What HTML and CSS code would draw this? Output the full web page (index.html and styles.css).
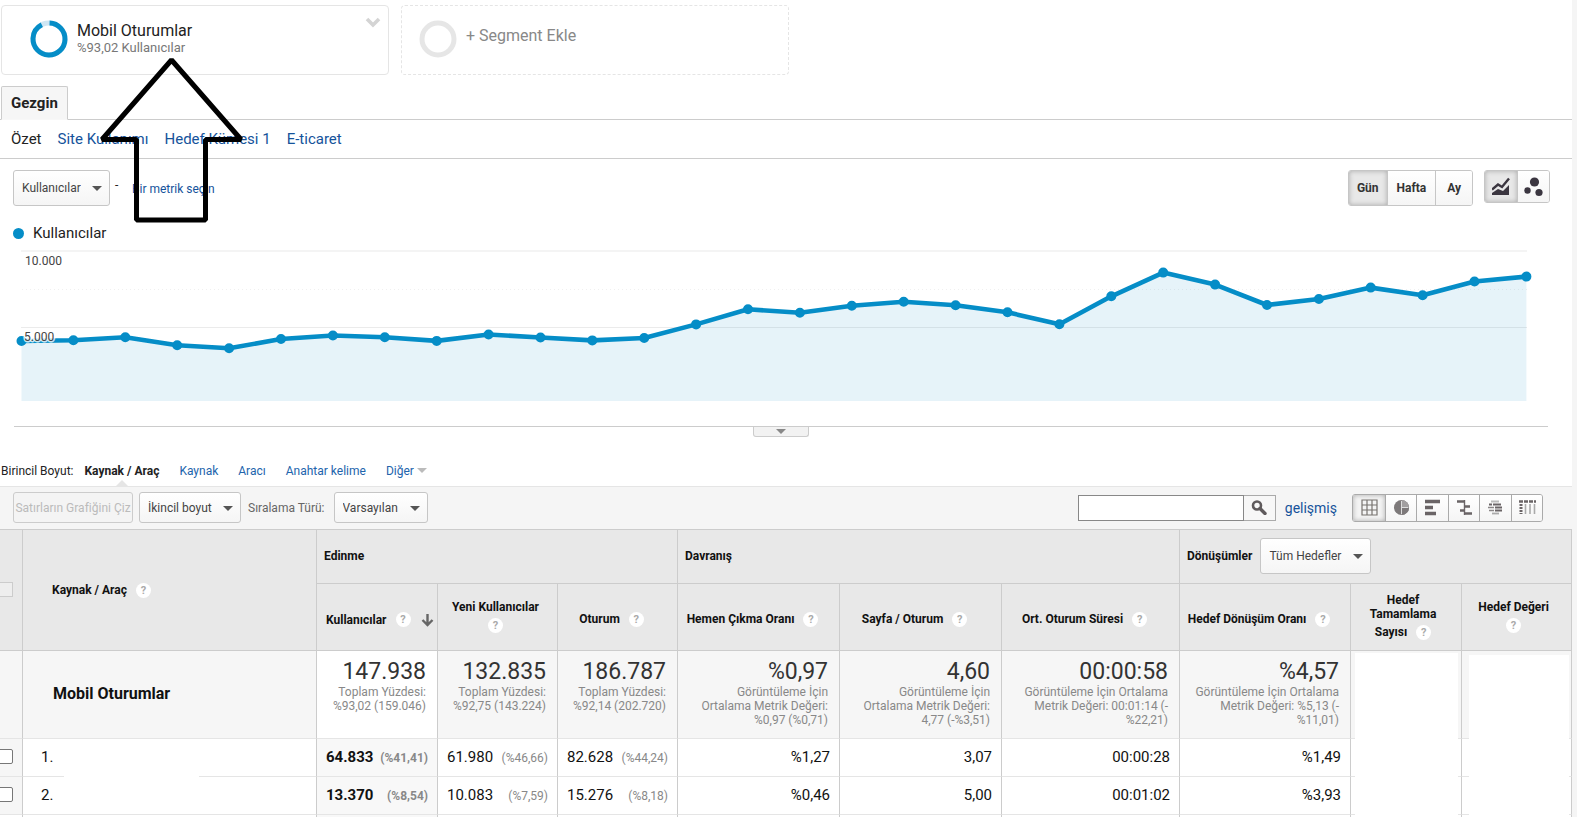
FILE: index.html
```html
<!DOCTYPE html>
<html lang="tr">
<head>
<meta charset="utf-8">
<title>Gezgin - Mobil Oturumlar</title>
<link rel="stylesheet" href="styles.css">
</head>
<body>
<main class="page">
  <section class="segments">
    <div class="segment">
      <svg class="ring" width="38" height="38" viewBox="0 0 38 38" aria-hidden="true"><circle cx="19" cy="19" r="16" fill="none" stroke="#cfe6f3" stroke-width="5"/><circle cx="19" cy="19" r="16" fill="none" stroke="#058dc7" stroke-width="5" pathLength="100" stroke-dasharray="92 8" transform="rotate(-88 19 19)"/></svg>
      <div class="segment-text"><div class="segment-name">Mobil Oturumlar</div><div class="segment-sub">%93,02 Kullanıcılar</div></div>
      <button class="segment-menu" aria-label="Segment menüsü"><svg width="16" height="11" viewBox="0 0 16 11"><path d="M2 2l6 6 6-6" fill="none" stroke="#d4d4d4" stroke-width="3.6"/></svg></button>
    </div>
    <button class="segment segment-add">
      <svg class="ring" width="38" height="38" viewBox="0 0 38 38" aria-hidden="true"><circle cx="19" cy="19" r="16" fill="none" stroke="#e6e6e6" stroke-width="5"/></svg>
      <span class="add-label">+ Segment Ekle</span>
    </button>
  </section>

  <div class="tabs"><button class="tab">Gezgin</button></div>
  <nav class="subnav"><span>Özet</span><a href="#">Site Kullanımı</a><a href="#">Hedef Kümesi 1</a><a href="#">E-ticaret</a></nav>

  <section class="controls">
    <span class="select tall"><select aria-label="Metrik"><option>Kullanıcılar</option></select></span>
    <span class="dash">-</span>
    <a class="metric-link" href="#">Bir metrik seçin</a>
    <div class="group periods"><button class="on">Gün</button><button>Hafta</button><button>Ay</button></div>
    <div class="group charts">
      <button class="on" aria-label="Çizgi grafik"><svg width="18" height="19" viewBox="0 0 18 19"><path d="M0 18v-2l6-4 5 2 6-6v10z" fill="#3b3640"/><path d="M0 12.500l6-5 4 2.500 7-8.500" fill="none" stroke="#3b3640" stroke-width="2.400"/></svg></button>
      <button aria-label="Hareket grafiği"><svg width="19" height="20" viewBox="0 0 19 20"><g fill="#3b3640"><circle cx="10.500" cy="5" r="4.600"/><circle cx="3.500" cy="13.500" r="3.200"/><circle cx="15" cy="15.500" r="3.600"/></g></svg></button>
    </div>
  </section>

  <div class="legend"><i class="dot"></i>Kullanıcılar</div>
  <svg class="chart" viewBox="0 243 1572 169" role="img" aria-label="Günlük kullanıcılar">
    <path d="M21 251H1527" stroke="#f4f4f4" stroke-width="2"/>
    <path d="M22 289.500H1527" stroke="#f0f0f0" stroke-dasharray="1 3"/>
    <path d="M21 327.500H1527" stroke="#ebebeb"/>
    <path d="M21.500 401V341L73.400 340.300L125.300 337.300L177.200 345.300L229.100 348.300L281 339L332.900 335.500L384.800 337.300L436.700 340.900L488.600 334.500L540.500 337.500L592.300 340.400L644.200 338L696.100 324.400L748 309.300L799.900 312.800L851.800 305.800L903.700 301.700L955.600 305.300L1007.500 312.300L1059.400 324.300L1111.300 296.300L1163.200 272.600L1215.100 284.600L1267 305L1318.900 299L1370.700 287.600L1422.600 295.300L1474.500 281.500L1526.400 276.600V401z" fill="#058dc7" fill-opacity=".1"/>
    <polyline points="21.500,341 73.400,340.300 125.300,337.300 177.200,345.300 229.100,348.300 281,339 332.900,335.500 384.800,337.300 436.700,340.900 488.600,334.500 540.500,337.500 592.300,340.400 644.200,338 696.100,324.400 748,309.300 799.900,312.800 851.800,305.800 903.700,301.700 955.600,305.300 1007.500,312.300 1059.400,324.300 1111.300,296.300 1163.200,272.600 1215.100,284.600 1267,305 1318.900,299 1370.700,287.600 1422.600,295.300 1474.500,281.500 1526.400,276.600" fill="none" stroke="#058dc7" stroke-width="4.600" stroke-linejoin="round"/>
    <path d="M21.500 341h0M73.400 340.300h0M125.300 337.300h0M177.200 345.300h0M229.100 348.300h0M281 339h0M332.900 335.500h0M384.800 337.300h0M436.700 340.900h0M488.600 334.500h0M540.500 337.500h0M592.300 340.400h0M644.200 338h0M696.100 324.400h0M748 309.300h0M799.900 312.800h0M851.800 305.800h0M903.700 301.700h0M955.600 305.300h0M1007.500 312.300h0M1059.400 324.300h0M1111.300 296.300h0M1163.200 272.600h0M1215.100 284.600h0M1267 305h0M1318.900 299h0M1370.700 287.600h0M1422.600 295.300h0M1474.500 281.500h0M1526.400 276.600h0" stroke="#058dc7" stroke-width="10" stroke-linecap="round"/>
    <text class="axis" x="25" y="265">10.000</text>
    <text class="axis" x="24" y="341">5.000</text>
  </svg>
  <div class="splitter"><button class="handle" aria-label="Grafiği gizle"></button></div>

  <nav class="dimensions"><span>Birincil Boyut:</span><strong class="current">Kaynak / Araç</strong><a href="#">Kaynak</a><a href="#">Aracı</a><a href="#">Anahtar kelime</a><a class="more" href="#">Diğer</a></nav>

  <section class="toolbar">
    <button class="plot" disabled>Satırların Grafiğini Çiz</button>
    <span class="select"><select aria-label="İkincil boyut"><option>İkincil boyut</option></select></span>
    <label class="sort" for="sort">Sıralama Türü:</label>
    <span class="select"><select id="sort"><option>Varsayılan</option></select></span>
    <div class="search"><input type="text" aria-label="Ara"><button aria-label="Ara"><svg width="16" height="15" viewBox="0 0 16 15"><circle cx="6" cy="5.500" r="4" fill="none" stroke="#5f5a5c" stroke-width="2.600"/><path d="M9 8.500l5 5" stroke="#5f5a5c" stroke-width="3.400" stroke-linecap="round"/></svg></button></div>
    <a class="advanced" href="#">gelişmiş</a>
    <div class="group views">
      <button class="on" aria-label="Tablo"><svg width="17" height="17" viewBox="0 0 17 17"><path d="M1 1h15v15H1zM6 1v15M11 1v15M1 6h15M1 11h15" fill="none" stroke="#77736f" stroke-width="1.200"/></svg></button>
      <button aria-label="Yüzde"><svg width="17" height="17" viewBox="0 0 17 17"><circle cx="8.500" cy="8.500" r="7.500" fill="#7d797a"/><path d="M8.500 1a7.500 7.500 0 0 1 0 15z" fill="#a29fa0"/><path d="M8.500 2v13M8.500 8.500H15" stroke="#ddd"/><path d="M9 9h7a7.500 7.500 0 0 1-7 7z" fill="#7d797a"/></svg></button>
      <button aria-label="Performans"><svg width="17" height="17" viewBox="0 0 17 17"><path d="M1 2.500h15M1 8.500h8M1 14.500h11" stroke="#6a6466" stroke-width="3.400"/></svg></button>
      <button aria-label="Karşılaştırma"><svg width="17" height="17" viewBox="0 0 17 17"><path d="M8.500 1v15" stroke="#6a6466" stroke-width="1.400"/><path d="M1 2.500h7M9 7.500h5M4 11.500h4M9 14.500h7" stroke="#6a6466" stroke-width="2.400"/></svg></button>
      <button aria-label="Terim bulutu"><svg width="17" height="17" viewBox="0 0 17 17"><path d="M4 2.500h8" stroke="#bbb" stroke-width="2"/><path d="M2 5.500h3M6 5.500h8M8 8.500h7M8 11.500h7" stroke="#6a6466" stroke-width="2.200"/><path d="M1 8.500h6M2 11.500h5" stroke="#8a8687" stroke-width="1.600"/><path d="M5 14.500h7" stroke="#aaa" stroke-width="1.800"/></svg></button>
      <button aria-label="Özet tablo"><svg width="17" height="17" viewBox="0 0 17 17"><path d="M0 2.500h17" stroke="#6a6466" stroke-width="2.600" stroke-dasharray="4 1"/><path d="M2 5v10" stroke="#6a6466" stroke-width="3" stroke-dasharray="2 1"/><path d="M6.500 5v10M11 5v10M15.500 5v10" stroke="#aaa" stroke-width="1.600"/></svg></button>
    </div>
  </section>

  <table class="report">
    <colgroup><col class="c-check"><col class="c-source"><col class="c-users"><col class="c-count"><col class="c-count"><col class="c-rate"><col class="c-rate"><col class="c-time"><col class="c-conv"><col class="c-goals"><col class="c-value"></colgroup>
    <thead>
      <tr class="groups"><th rowspan="2" class="check"><input type="checkbox" disabled aria-label="Tümünü seç"></th><th rowspan="2" class="source">Kaynak / Araç<i class="help">?</i></th><th colspan="3">Edinme</th><th colspan="3">Davranış</th><th colspan="3"><div class="goal-head"><label for="goals">Dönüşümler</label><span class="select tall"><select id="goals"><option>Tüm Hedefler</option></select></span></div></th></tr>
      <tr class="metrics"><th class="sorted"><div>Kullanıcılar<i class="help">?</i><svg class="down" width="13" height="14" viewBox="0 0 13 14"><path d="M6.500 1v11M1.500 7l5 5 5-5" fill="none" stroke="#666" stroke-width="2.400"/></svg></div></th><th class="wrap">Yeni Kullanıcılar<br><i class="help alone">?</i></th><th>Oturum<i class="help">?</i></th><th>Hemen Çıkma Oranı<i class="help">?</i></th><th>Sayfa / Oturum<i class="help">?</i></th><th>Ort. Oturum Süresi<i class="help">?</i></th><th>Hedef Dönüşüm Oranı<i class="help">?</i></th><th class="wrap">Hedef<br>Tamamlama<br>Sayısı<i class="help last-line">?</i></th><th class="wrap">Hedef Değeri<br><i class="help alone">?</i></th></tr>
    </thead>
    <tbody>
      <tr class="totals"><td></td><td class="title">Mobil Oturumlar</td>
        <td class="sorted"><b>147.938</b>Toplam Yüzdesi: %93,02 (159.046)</td>
        <td><b>132.835</b>Toplam Yüzdesi: %92,75 (143.224)</td>
        <td><b>186.787</b>Toplam Yüzdesi: %92,14 (202.720)</td>
        <td><b>%0,97</b>Görüntüleme İçin<br>Ortalama Metrik Değeri:<br>%0,97 (%0,71)</td>
        <td><b>4,60</b>Görüntüleme İçin<br>Ortalama Metrik Değeri:<br>4,77 (-%3,51)</td>
        <td><b>00:00:58</b>Görüntüleme İçin Ortalama<br>Metrik Değeri: 00:01:14 (-<br>%22,21)</td>
        <td><b>%4,57</b>Görüntüleme İçin Ortalama<br>Metrik Değeri: %5,13 (-<br>%11,01)</td>
        <td class="hidden"><span class="cover"></span></td><td class="hidden"><span class="cover cover-last"></span></td></tr>
      <tr class="row"><td class="check"><input type="checkbox" aria-label="Satır 1"></td><td class="index">1.<span class="gap"></span></td>
        <td class="sorted"><div class="pair"><span>64.833</span><small>(%41,41)</small></div></td><td><div class="pair"><span>61.980</span><small>(%46,66)</small></div></td><td><div class="pair"><span>82.628</span><small>(%44,24)</small></div></td>
        <td>%1,27</td><td>3,07</td><td>00:00:28</td><td>%1,49</td><td></td><td></td></tr>
      <tr class="row"><td class="check"><input type="checkbox" aria-label="Satır 2"></td><td class="index">2.</td>
        <td class="sorted"><div class="pair"><span>13.370</span><small>(%8,54)</small></div></td><td><div class="pair"><span>10.083</span><small>(%7,59)</small></div></td><td><div class="pair"><span>15.276</span><small>(%8,18)</small></div></td>
        <td>%0,46</td><td>5,00</td><td>00:01:02</td><td>%3,93</td><td></td><td></td></tr>
      <tr class="rest"><td></td><td></td><td class="sorted"></td><td></td><td></td><td></td><td></td><td></td><td></td><td></td><td></td></tr>
    </tbody>
  </table>
</main>
<svg class="arrow" width="146" height="166" viewBox="98 57 146 166" aria-hidden="true"><path d="M171.500 60L241 139.500H205.500V220H136.500V139.500H102z" fill="none" stroke="#000" stroke-width="5" stroke-linejoin="bevel"/></svg>
</body>
</html>
```
FILE: styles.css
```css
* { box-sizing: border-box; }
body { margin: 0; background: #f5f5f5; font-family: Roboto, "Liberation Sans", sans-serif; font-size: 12px; color: #222; }
button, input, select { font: inherit; color: inherit; margin: 0; padding: 0; }
button { cursor: pointer; }
a { color: #15539b; text-decoration: none; }
.page { background: #fff; margin-right: 5px; overflow: hidden; }

.segments { display: flex; gap: 12px; padding: 5px 0 0 1px; }
.segment { position: relative; display: flex; width: 388px; height: 70px; padding: 14px 28px; border: 1px solid #e5e5e5; border-radius: 4px; background: #fff; text-align: left; }
.segment-add { align-items: flex-start; border-style: dashed; padding-left: 17px; }
.segment-text { padding: 1px 0 0 9px; }
.segment-name { font-size: 16px; line-height: 20px; }
.segment-sub { color: #777; font-size: 13px; line-height: 14px; }
.segment-menu { position: absolute; top: 11px; right: 7px; border: 0; background: none; }
.segment-menu svg { display: block; }
.add-label { padding-left: 9px; font-size: 16px; line-height: 32px; color: #888; }

.tabs { display: flex; margin-top: 11px; padding-left: 1px; border-bottom: 1px solid #ccc; }
.tab { height: 34px; margin-bottom: -1px; padding: 0 9px; border: 1px solid #ccc; border-bottom-color: #f8f8f8; border-radius: 2px 2px 0 0; background: #f6f6f6; font-size: 15px; font-weight: bold; }
.subnav { display: flex; align-items: center; gap: 16px; height: 39px; padding-left: 11px; border-bottom: 1px solid #ccc; font-size: 15px; }

.controls { display: flex; align-items: flex-start; padding: 11px 22px 0 13px; }
.select { position: relative; display: inline-flex; height: 31px; }
.select.tall { height: 36px; }
.select select { appearance: none; padding: 0 28px 0 8px; border: 1px solid #c6c6c6; border-radius: 3px; background: linear-gradient(#fff, #f5f5f5); color: #444; font-size: 12px; }
.select::after { content: ""; position: absolute; right: 8px; top: 50%; margin-top: -2px; border: 5px solid transparent; border-top-color: #555; border-bottom: 0; pointer-events: none; }
.dash { width: 22px; padding-left: 5px; line-height: 30px; }
.metric-link { padding-top: 2px; line-height: 34px; }
.group { display: flex; border: 1px solid #c6c6c6; border-radius: 3px; overflow: hidden; }
.group button { display: flex; align-items: center; justify-content: center; border: 0; border-left: 1px solid #c6c6c6; background: linear-gradient(#fff, #f5f5f5); }
.group button:first-child { border-left: 0; }
.group .on { background: #e8e8e8; box-shadow: inset 0 0 5px #aaa; }
.periods { margin-left: auto; height: 36px; font-weight: bold; color: #333; }
.periods button { padding: 0 9px; }
.periods button:first-child { padding: 0 8px; }
.periods button:last-child { padding: 0 11px; }
.charts { margin-left: 11px; height: 33px; }
.charts button { width: 32px; }

.legend { display: flex; align-items: center; gap: 9px; padding: 17px 0 0 13px; font-size: 15px; line-height: 20px; }
.dot { width: 11px; height: 11px; border-radius: 50%; background: #058dc7; }
.chart { display: block; width: 100%; }
.axis { font-size: 12px; fill: #444; stroke: #fff; stroke-width: 3px; paint-order: stroke; stroke-opacity: .8; }
.splitter { display: flex; justify-content: center; margin: 14px 24px 0 14px; border-top: 1px solid #ccc; }
.handle { display: flex; align-items: center; justify-content: center; width: 56px; height: 10px; border: 1px solid #ccc; border-top: 0; border-radius: 0 0 3px 3px; background: #f2f2f2; }
.handle::after { content: ""; border: 5px solid transparent; border-top-color: #888; border-bottom: 0; }

.dimensions { display: flex; height: 49px; padding: 19px 0 0 1px; line-height: 30px; }
.dimensions a { margin-left: 20px; color: #2264ac; }
.dimensions .current { position: relative; margin-left: 11px; }
.current::after { content: ""; position: absolute; bottom: 0; left: 50%; margin-left: -6px; border: 6px solid transparent; border-bottom-color: #e5e5e5; border-top: 0; }
.more::after { content: ""; display: inline-block; margin: 0 0 2px 3px; border: 5px solid transparent; border-top-color: #bbb; border-bottom: 0; }

.toolbar { display: flex; align-items: center; padding: 5px 29px 6px 13px; border-top: 1px solid #e5e5e5; background: #f5f5f5; }
.plot { width: 120px; height: 31px; margin-right: 6px; border: 1px solid #ccc; border-radius: 3px; background: #f4f4f4; color: #bbb; white-space: nowrap; overflow: hidden; }
.sort { margin: 0 9px 0 7px; color: #666; }
.search { display: flex; margin-left: auto; height: 26px; }
.search input { width: 166px; padding: 0 5px; border: 1px solid #888; background: #fff; }
.search button { width: 32px; border: 1px solid #aaa; border-left: 0; background: #f7f7f7; }
.search svg { display: block; margin: auto; }
.advanced { margin: 0 15px 0 9px; font-size: 14px; }
.views { height: 28px; border-color: #aaa; }
.views button { width: 31px; border-color: #aaa; }
.views button:nth-child(odd) { width: 32px; }
.views .on { background: #f4f4f4; }

.report { width: 100%; table-layout: fixed; border-spacing: 0; }
.c-check { width: 23px; } .c-source { width: 294px; } .c-users { width: 121px; } .c-count { width: 120px; }
.c-rate { width: 162px; } .c-time { width: 178px; } .c-conv { width: 171px; } .c-goals { width: 111px; } .c-value { width: 110px; }
.report th, .report td { padding: 0; border-right: 1px solid #ccc; border-bottom: 1px solid #e5e5e5; }
.report th { border-bottom-color: #ccc; background: #e8e8e8; color: #111; line-height: 14px; }
.report .groups th { height: 55px; padding: 0 0 2px 7px; border-top: 1px solid #ccc; text-align: left; }
.report .groups .source { padding: 0 0 0 29px; }
.report .groups .check, .report .check { padding: 0 0 2px; text-align: left; }
.check input { display: block; appearance: none; width: 15px; height: 15px; margin-left: -2px; border: 1px solid #777; border-radius: 2px; background: #fff; }
.check input:disabled { border-color: #ccc; background: #eee; border-radius: 0; }
.goal-head { display: flex; align-items: center; gap: 8px; }
.goal-head .select { font-weight: normal; }
.report .metrics th { height: 67px; padding: 5px 12px 0 0; }
.report .metrics .wrap { padding: 0 4px 2px 0; }
.report .metrics .wrap:nth-child(n+8) { padding-right: 6px; }
.metrics .sorted div { display: flex; align-items: center; padding-left: 9px; }
.report .metrics .sorted { padding-right: 0; }
.down { margin-left: 10px; }
.help { display: inline-block; width: 15px; height: 15px; margin-left: 9px; border-radius: 50%; background: #fff; color: #aaa; font-size: 11px; font-style: normal; line-height: 15px; text-align: center; }
.help.alone { margin-left: 0; margin-top: 4px; }
.help.last-line { margin-top: 4px; }
.report .totals td { height: 88px; padding: 7px 11px 0 10px; background: #f6f6f6; color: #888; line-height: 14px; text-align: right; vertical-align: top; }
.totals b { display: block; color: #333; font-size: 23px; font-weight: normal; line-height: 27px; }
.report .totals .sorted { background: #fff; }
.report .totals .title { padding: 0 0 2px 30px; color: #111; font-size: 16px; font-weight: bold; text-align: left; vertical-align: middle; }
.report .totals .hidden { position: relative; padding: 0; }
.cover { position: absolute; inset: 2px 3px -80px 4px; background: #fff; }
.cover-last { inset: 4px 2px -80px 7px; }
.report .row td { height: 38px; padding: 0 9px 2px 9px; color: #111; font-size: 15px; text-align: right; }
.row .check { background: #f6f6f6; }
.report .row .check { padding: 0 0 2px; }
.row .sorted, .rest .sorted { background: #f8f8f8; }
.row .sorted { font-weight: bold; }
.report .row .index { position: relative; padding-left: 18px; text-align: left; }
.gap { position: absolute; left: 41px; bottom: -1px; width: 135px; height: 1px; background: #fff; }
.pair { display: flex; align-items: baseline; justify-content: space-between; }
.pair small { color: #888; font-size: 12px; }
.rest td { height: 2px; border-bottom: 0; }
.arrow { position: absolute; left: 98px; top: 57px; }
```
